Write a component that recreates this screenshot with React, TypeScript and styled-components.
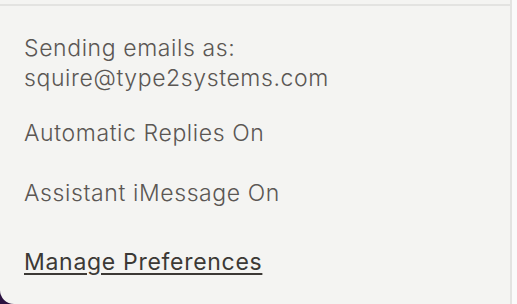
import React from "react";
import styled, { createGlobalStyle } from "styled-components";

const GlobalStyle = createGlobalStyle`
  html, body {
    margin: 0;
    padding: 0;
    width: 517px;
    height: 304px;
    overflow: hidden;
    background: #2b1240;
  }
`;

const Page = styled.div`
  width: 517px;
  height: 304px;
  display: flex;
  background: #fafafa;
`;

const Panel = styled.div`
  width: 510px;
  height: 304px;
  background: #f4f4f2;
  border-right: 2px solid #e3e3e1;
  border-bottom-left-radius: 14px;
  display: flex;
  flex-direction: column;
  font-family: Inter, "Noto Sans", sans-serif;
  box-shadow: -14px 14px 0 0 #2b1240;
`;

const TopStrip = styled.div`
  height: 4px;
  flex-shrink: 0;
  border-bottom: 2px solid #e3e3e1;
`;

const Body = styled.div`
  display: flex;
  flex-direction: column;
  padding: 27px 24px 0 24px;
`;

const Line = styled.div<{ $gap?: number }>`
  color: #5b5754;
  font-size: 23px;
  font-weight: 300;
  line-height: 30px;
  letter-spacing: 0.6px;
  margin-top: ${(p) => p.$gap ?? 0}px;
`;

const Link = styled.a`
  margin-top: 39px;
  color: #3c3935;
  font-size: 23px;
  font-weight: 400;
  line-height: 30px;
  letter-spacing: 0.7px;
  text-decoration: underline;
  text-underline-offset: 3px;
  text-decoration-thickness: 2px;
  align-self: flex-start;
`;

export default function App() {
  return (
    <>
      <GlobalStyle />
      <Page>
        <Panel>
          <TopStrip />
          <Body>
            <Line>Sending emails as:</Line>
            <Line>squire@type2systems.com</Line>
            <Line $gap={25}>Automatic Replies On</Line>
            <Line $gap={30}>Assistant iMessage On</Line>
            <Link href="#">Manage Preferences</Link>
          </Body>
        </Panel>
      </Page>
    </>
  );
}
